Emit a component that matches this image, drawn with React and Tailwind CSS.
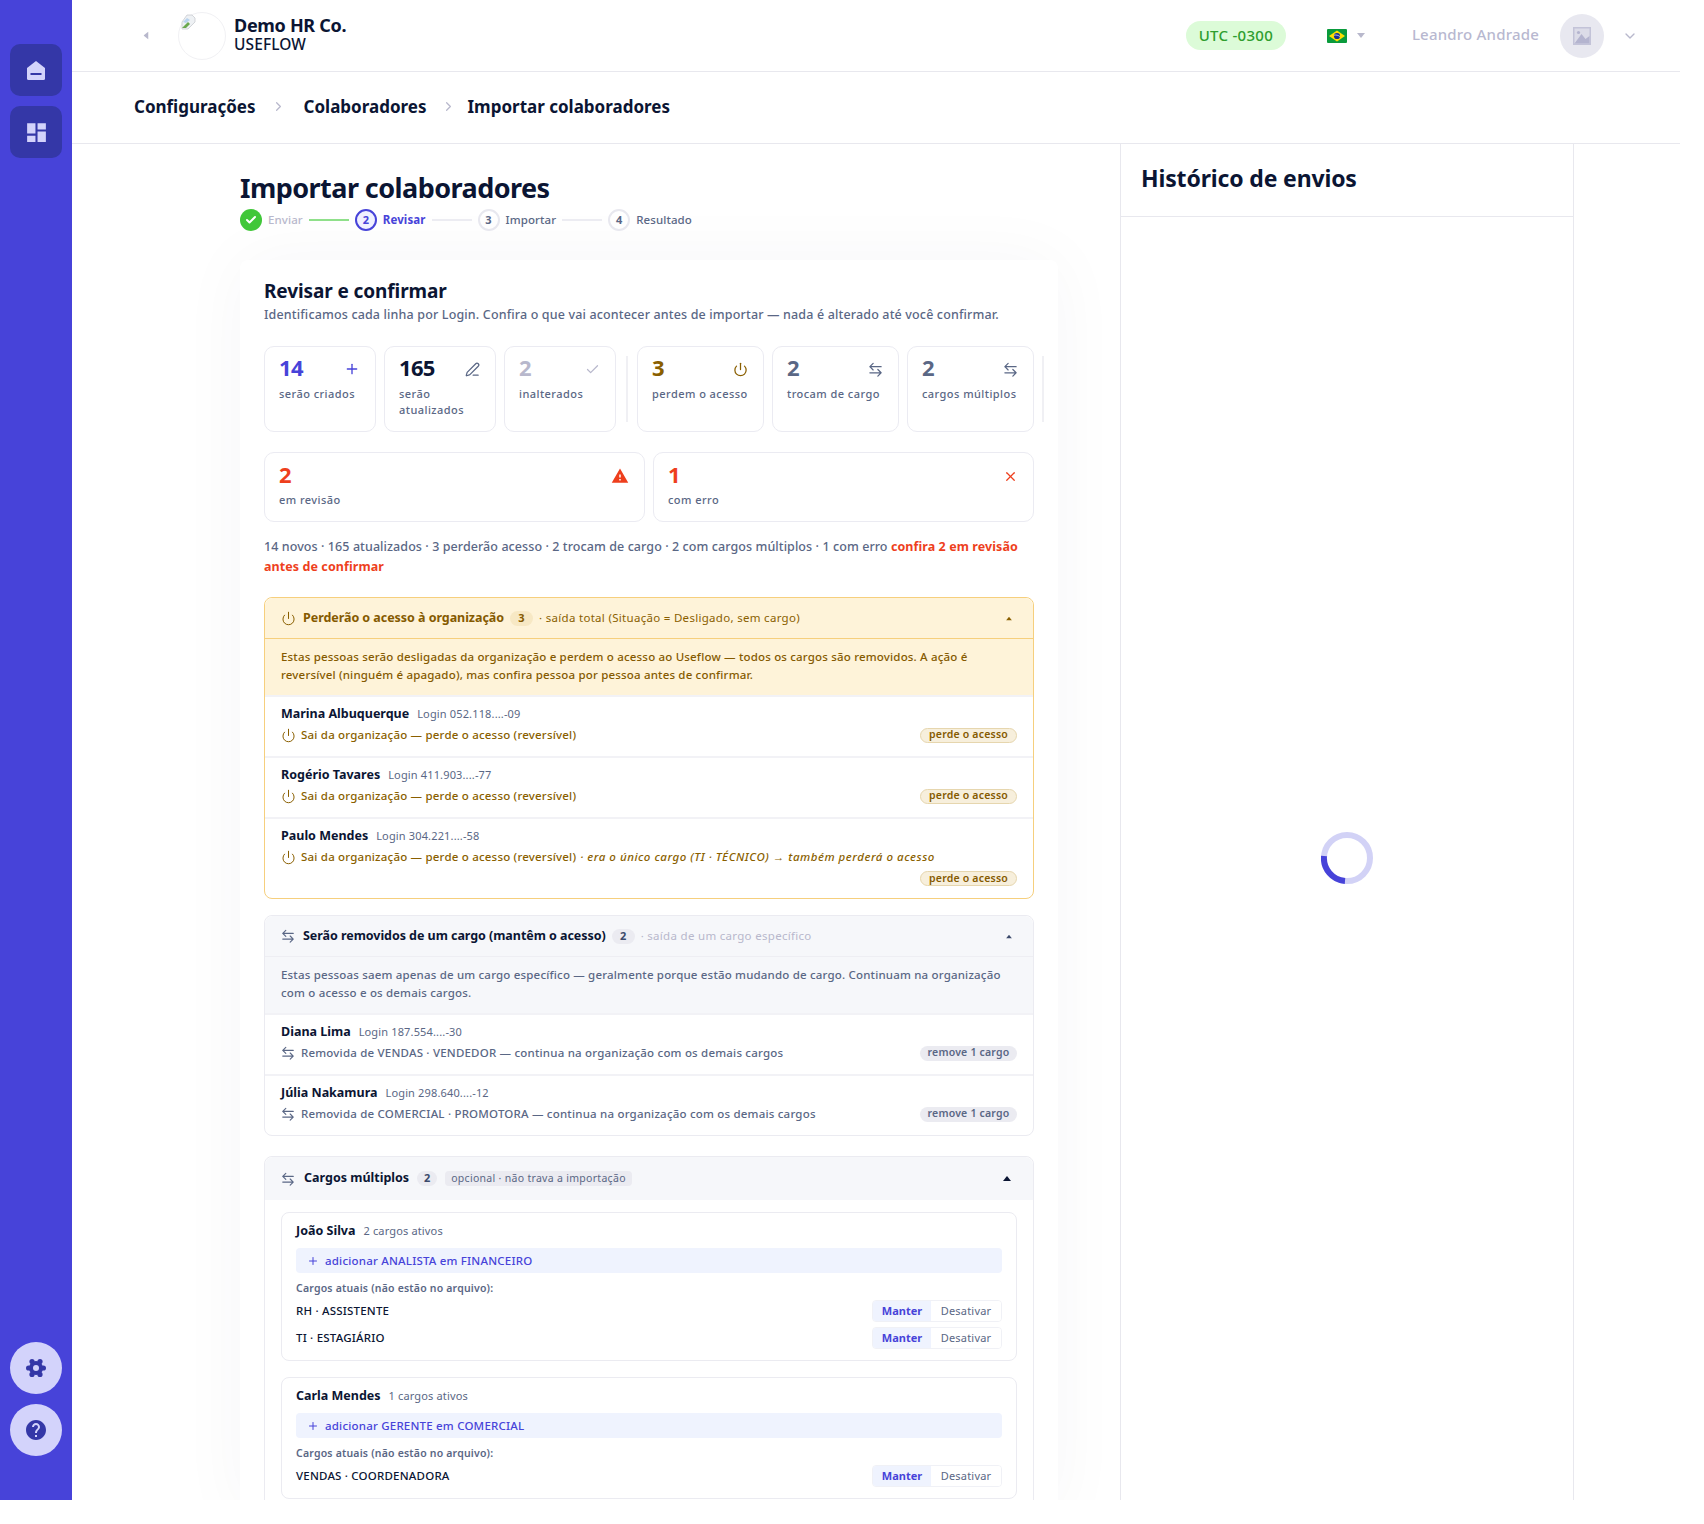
import React from 'react';
import { Check, ChevronDown, ChevronRight, PenLine, Plus, Power, X } from 'lucide-react';
import { MdDashboard, MdHelp, MdWarning } from 'react-icons/md';

const HomeIcon = () => (
    <svg width="24" height="24" viewBox="0 0 24 24">
        <path d="M12 3 21 10V20.5A1.5 1.5 0 0 1 19.5 22H4.5A1.5 1.5 0 0 1 3 20.5V10Z" fill="#d3d3fb" />
        <rect x="6.5" y="15" width="11" height="2" fill="#3437a7" />
    </svg>
);

const GearIcon = () => (
    <svg width="20" height="20" viewBox="0 0 20 20" fill="#3437a7">
        <circle cx="10" cy="10" r="7" />
        <circle cx="6" cy="3.6" r="2.6" />
        <circle cx="14" cy="3.6" r="2.6" />
        <circle cx="2.6" cy="10" r="2.6" />
        <circle cx="17.4" cy="10" r="2.6" />
        <circle cx="6" cy="16.4" r="2.6" />
        <circle cx="14" cy="16.4" r="2.6" />
        <circle cx="10" cy="10" r="3" fill="#d3d3fb" />
    </svg>
);

const SwapIcon = ({ size = 14 }) => (
    <svg width={size} height={size} viewBox="0 0 16 16" fill="none" stroke="currentColor" strokeWidth="1.3" strokeLinecap="round" strokeLinejoin="round">
        <path d="M2 5h12M5.5 1.5 2 5l3.5 3.5" />
        <path d="M14 11.5H2M10.5 8l3.5 3.5L10.5 15" />
    </svg>
);

const BrokenImage = () => (
    <svg width="16" height="16" viewBox="0 0 16 16" className="absolute left-[1px] top-[1px]">
        <path d="M7 1h5l3 3v4L8 15H2V8Z" fill="#eef1f4" stroke="#c9ccd1" strokeWidth="0.8" />
        <path d="M2 14 8 8l2 2-4 4Z" fill="#6aa84f" />
        <path d="M3 8l4-4 3 2-4 3Z" fill="#b9d3ee" />
    </svg>
);

const PhotoIcon = () => (
    <svg width="20" height="20" viewBox="0 0 20 20">
        <rect x="1" y="1" width="18" height="18" fill="#c3c3d8" />
        <rect x="2.5" y="2.5" width="15" height="15" fill="#dcdce8" />
        <circle cx="6.5" cy="6.5" r="1.6" fill="#b4b4cf" />
        <path d="M2.5 17.5 9.5 8l4 5 4-3v7.5Z" fill="#b4b4cf" />
    </svg>
);

const BrazilFlag = () => (
    <svg width="20" height="14" viewBox="0 0 20 14">
        <rect width="20" height="14" rx="1" fill="#0a9b3c" />
        <path d="M10 1.6 18 7l-8 5.4L2 7Z" fill="#fedf00" />
        <circle cx="10" cy="7" r="3.1" fill="#1b2f8f" />
        <path d="M7 6.2c2-.5 4.4 0 6 1.4" stroke="#fff" strokeWidth="0.7" fill="none" />
    </svg>
);

const Caret = ({ className = '' }) => (
    <svg width="8" height="5" viewBox="0 0 8 5" className={className} fill="currentColor">
        <path d="M4 0 8 5H0Z" />
    </svg>
);

const Spinner = () => (
    <svg width="52" height="52" viewBox="0 0 52 52" fill="none" strokeWidth="6" className="-mt-[2px]">
        <circle cx="26" cy="26" r="23" stroke="#d2d2f6" />
        <path d="M3 24a23 23 0 0 0 21 25" stroke="#4743d9" />
    </svg>
);

const steps = [
    { n: '2', label: 'Revisar', active: true },
    { n: '3', label: 'Importar' },
    { n: '4', label: 'Resultado' },
];

const Stepper = () => (
    <div className="mt-[3px] flex h-[22px] items-center gap-[6px] text-[11.5px] font-medium tracking-[0.1px]">
        <span className="flex h-[22px] w-[22px] items-center justify-center rounded-full bg-[#41c739]">
            <Check size={12} strokeWidth={4} color="#fff" />
        </span>
        <span className="text-[#b8b8cc]">Enviar</span>
        <span className="h-[2px] w-[40px] bg-[#8fe08a]" />
        {steps.map((step, i) => (
            <React.Fragment key={step.n}>
                {i > 0 && <span className="h-[2px] w-[40px] bg-[#ececf2]" />}
                <span
                    className={`flex h-[22px] w-[22px] items-center justify-center rounded-full border-2 text-[11px] font-bold ${
                        step.active ? 'border-[#4743d9] bg-[#f0f0ff] text-[#4743d9]' : 'border-[#e8e8ef] text-[#5a6785]'
                    }`}
                >
                    {step.n}
                </span>
                <span className={step.active ? 'font-bold text-[#4743d9]' : 'text-[#5a6785]'}>{step.label}</span>
            </React.Fragment>
        ))}
    </div>
);

const StatCard = ({ value, label, icon, color, wide }) => (
    <div className={`flex-1 rounded-[10px] border border-[#ebebf2] pl-[14px] pr-[10px] ${wide ? 'pt-[7px]' : 'pt-[6px]'}`}>
        <div className="flex h-[28px] items-center justify-between">
            <span className={`text-[22px] leading-[28px] font-bold tracking-[-0.7px] ${color}`}>{value}</span>
            <span className={`mr-[5px] mt-[4px] ${color}`}>{icon}</span>
        </div>
        <p className={`${wide ? 'mt-1' : 'mt-[5px]'} text-[11px] leading-[16px] font-medium tracking-[0.45px] text-[#5a6785]`}>{label}</p>
    </div>
);

const Section = ({ tone, icon, title, count, sub, desc, children }) => {
    const amber = tone === 'amber';
    return (
        <section className={`mb-4 rounded-[8px] border ${amber ? 'border-[#f6cf7d]' : 'border-[#ebebf1]'}`}>
            <header
                className={`flex h-[41px] items-center rounded-t-[8px] pl-[16px] pr-[20px] ${
                    amber ? 'border-b border-[#f6cf7d] bg-[#fef3d9]' : 'border-b border-[#eeeef3] bg-[#f6f7fa]'
                }`}
            >
                <span className={`w-[22px] ${amber ? 'text-[#8a5f00]' : 'text-[#5a6785]'}`}>{icon}</span>
                <span className={`text-[12.5px] font-bold tracking-[-0.05px] ${amber ? 'text-[#855a00]' : 'text-[#0b1533]'}`}>{title}</span>
                <span
                    className={`ml-[6px] flex h-[15px] w-[23px] items-center justify-center rounded-full text-[11px] font-bold ${
                        amber ? 'bg-[#f7e8c4] text-[#855a00]' : 'bg-[#ebebf1] text-[#3c4a6b]'
                    }`}
                >
                    {count}
                </span>
                <span className={`ml-[6px] text-[11.5px] tracking-[0.3px] ${amber ? 'text-[#8a5f00]' : 'text-[#b8b8cc]'}`}>{sub}</span>
                <Caret className={`ml-auto scale-75 ${amber ? 'text-[#8a5f00]' : 'text-[#3c4a6b]'}`} />
            </header>
            <p
                className={`px-4 pt-[9px] pb-[11px] text-[11.5px] leading-[18px] font-medium tracking-[0.18px] ${
                    amber ? 'bg-[#fef3d9] text-[#855a00]' : 'bg-[#f6f7fa] text-[#5a6785]'
                }`}
            >
                {desc}
            </p>
            {children}
        </section>
    );
};

const PersonRow = ({ name, login, text, extra, badge, tone, icon }) => {
    const amber = tone === 'amber';
    return (
        <div className={`border-t-2 border-[#f2f2f6] px-4 pt-[8px] ${extra ? 'pb-[12px]' : 'pb-[11px]'}`}>
            <div className="flex h-[18px] items-center gap-[8px]">
                <span className="text-[12.5px] font-bold text-[#0b1533]">{name}</span>
                <span className="text-[11px] tracking-[0.15px] text-[#5a6785]">Login {login}</span>
            </div>
            <div className="mt-[2px] flex flex-wrap items-center justify-between gap-y-1">
                <div className={`flex h-[20px] items-center text-[11.5px] font-medium tracking-[0.2px] whitespace-nowrap ${amber ? 'text-[#8a5f00]' : 'text-[#5a6785]'}`}>
                    <span className="w-[20px]">{icon}</span>
                    <span>{text}</span>
                    {extra && <em className="ml-[4px] tracking-[0.52px]">· {extra}</em>}
                </div>
                <span
                    className={`ml-auto flex h-[15px] w-[97px] items-center justify-center rounded-full text-[10.5px] font-semibold tracking-[0.2px] ${
                        amber ? 'border border-[#e6d6ae] bg-[#f7efdc] text-[#855a00]' : 'bg-[#ebebf1] text-[#5a6785]'
                    }`}
                >
                    {badge}
                </span>
            </div>
        </div>
    );
};

const Segment = ({ label, className = '' }) => (
    <div className={`flex items-center justify-between ${className}`}>
        <span className="text-[11.5px] font-medium tracking-[0.2px] text-[#0b1533]">{label}</span>
        <div className="flex h-[22px] w-[130px] overflow-hidden rounded-[4px] border border-[#f0f1f6] text-[11px]">
            <span className="flex w-[58px] items-center justify-center bg-[#eff3fe] font-bold text-[#4743d9]">Manter</span>
            <span className="flex flex-1 items-center justify-center bg-white tracking-[0.2px] text-[#5a6785]">Desativar</span>
        </div>
    </div>
);

const MultiCard = ({ name, active, add, cargos, className = '' }) => (
    <div className={`rounded-[8px] border border-[#ebebf1] px-[14px] pt-[9px] pb-[11px] ${className}`}>
        <div className="flex h-[18px] items-center gap-[8px]">
            <span className="text-[12.5px] font-bold text-[#0b1533]">{name}</span>
            <span className="text-[11px] tracking-[0.15px] text-[#5a6785]">{active}</span>
        </div>
        <div className="mt-[8px] flex h-[25px] items-center gap-[6px] rounded-[4px] bg-[#eff3fe] px-[11px] text-[11.5px] font-medium tracking-[0.2px] text-[#4743d9]">
            <Plus size={12} />
            <span>{add}</span>
        </div>
        <p className="mt-[7px] text-[10.5px] leading-[16px] font-semibold tracking-[0.2px] text-[#5a6785]">Cargos atuais (não estão no arquivo):</p>
        {cargos.map((cargo, i) => (
            <Segment key={cargo} label={cargo} className={i === 0 ? 'mt-[4px]' : 'mt-[5px]'} />
        ))}
    </div>
);

const powerIcon = <Power size={15} strokeWidth={1.6} />;
const swapIcon = <SwapIcon />;

const App = () => (
    <div className="flex h-[1500px] w-[1680px] overflow-hidden bg-white font-['Noto_Sans',sans-serif] text-[#0b1533]">
        <aside className="flex w-[72px] shrink-0 flex-col items-center gap-[10px] bg-[#4743d9] pt-[44px] pb-[44px]">
            <button className="flex h-[52px] w-[52px] items-center justify-center rounded-[10px] bg-[#3437a7]">
                <HomeIcon />
            </button>
            <button className="flex h-[52px] w-[52px] items-center justify-center rounded-[10px] bg-[#3437a7]">
                <MdDashboard size={25} color="#d3d3fb" />
            </button>
            <button className="mt-auto flex h-[52px] w-[52px] items-center justify-center rounded-full bg-[#d3d3fb]">
                <GearIcon />
            </button>
            <button className="flex h-[52px] w-[52px] items-center justify-center rounded-full bg-[#d3d3fb]">
                <MdHelp size={24} color="#3437a7" />
            </button>
        </aside>

        <div className="flex min-w-0 flex-1 flex-col">
            <div className="flex h-[72px] shrink-0 items-center border-b border-[#e8e8ee] pr-[42px]">
                <Caret className="ml-[70px] -rotate-90 text-[#b8b8cc]" />
                <div className="relative ml-[28px] h-[48px] w-[48px] rounded-full border border-[#f1f1f4]">
                    <BrokenImage />
                </div>
                <div className="-mt-[3px] ml-[8px]">
                    <p className="text-[18px] leading-[20px] font-bold tracking-[-0.3px]">Demo HR Co.</p>
                    <p className="text-[15.5px] leading-[18px] font-medium tracking-[0.1px]">USEFLOW</p>
                </div>
                <span className="ml-auto flex h-[29px] w-[100px] items-center justify-center rounded-full bg-[#dcfbd8] pb-[1px] text-[15px] font-medium tracking-[0.3px] text-[#2f9e2f]">
                    UTC -0300
                </span>
                <span className="ml-[41px]"><BrazilFlag /></span>
                <Caret className="ml-[10px] rotate-180 text-[#b8b8cc]" />
                <span className="ml-[47px] pb-[2px] text-[15px] font-medium tracking-[0.2px] text-[#b8b8d0]">Leandro Andrade</span>
                <span className="ml-[21px] flex h-[44px] w-[44px] items-center justify-center rounded-full bg-[#e8e8f0]">
                    <PhotoIcon />
                </span>
                <ChevronDown size={16} className="ml-[18px] text-[#b8b8cc]" />
            </div>

            <nav className="flex h-[72px] shrink-0 items-center border-b border-[#e8e8ee] pb-[2px] pl-[62px] text-[17px] font-bold">
                <span>Configurações</span>
                <ChevronRight size={15} className="ml-[15px] mr-[18px] text-[#b8b8cc]" />
                <span>Colaboradores</span>
                <ChevronRight size={15} className="ml-[15px] mr-[11px] text-[#b8b8cc]" />
                <span>Importar colaboradores</span>
            </nav>

            <div className="flex min-h-0 flex-1">
                <main className="w-[1048px] shrink-0 pl-[168px]">
                    <div className="w-[818px] pt-[26px]">
                        <h1 className="text-[27px] leading-[36px] font-bold tracking-[-0.55px]">Importar colaboradores</h1>
                        <Stepper />
                        <div className="mt-[29px] rounded-t-[8px] bg-white px-[24px] pt-[17px] shadow-[0_0_70px_rgba(30,30,80,0.04)]">
                            <h2 className="text-[19px] leading-[28px] font-bold tracking-[-0.1px]">Revisar e confirmar</h2>
                            <p className="text-[12.5px] leading-[20px] font-medium tracking-[0.15px] text-[#5a6785]">
                                Identificamos cada linha por Login. Confira o que vai acontecer antes de importar — nada é alterado até você confirmar.
                            </p>

                            <div className="mt-[21px] flex h-[86px]">
                                <div className="flex w-[352px] shrink-0 gap-2">
                                    <StatCard value="14" label="serão criados" color="text-[#4743d9]" icon={<Plus size={16} />} />
                                    <StatCard value="165" label="serão atualizados" color="text-[#0b1533]" icon={<PenLine size={15} className="text-[#5a6785]" />} />
                                    <StatCard value="2" label="inalterados" color="text-[#b8b8cc]" icon={<Check size={15} />} />
                                </div>
                                <span className="my-[10px] ml-[10px] w-[2px] shrink-0 bg-[#f0f0f4]" />
                                <div className="ml-[9px] flex w-[397px] shrink-0 gap-2">
                                    <StatCard value="3" label="perdem o acesso" color="text-[#8a5f00]" icon={<Power size={15} />} />
                                    <StatCard value="2" label="trocam de cargo" color="text-[#5a6785]" icon={<SwapIcon size={15} />} />
                                    <StatCard value="2" label="cargos múltiplos" color="text-[#5a6785]" icon={<SwapIcon size={15} />} />
                                </div>
                                <span className="my-[10px] ml-[8px] w-[2px] shrink-0 bg-[#f0f0f4]" />
                            </div>

                            <div className="mt-5 flex h-[70px] gap-2">
                                <StatCard wide value="2" label="em revisão" color="text-[#ee3f1d]" icon={<MdWarning size={18} />} />
                                <StatCard wide value="1" label="com erro" color="text-[#ee3f1d]" icon={<X size={15} />} />
                            </div>

                            <p className="mt-[15px] text-[12.5px] leading-[20px] font-medium tracking-[0.08px] text-[#5a6785]">
                                14 novos · 165 atualizados · 3 perderão acesso · 2 trocam de cargo · 2 com cargos múltiplos · 1 com erro{' '}
                                <span className="font-bold text-[#ee3f1d]">confira 2 em revisão antes de confirmar</span>
                            </p>

                            <div className="mt-5">
                                <Section
                                    tone="amber"
                                    icon={powerIcon}
                                    title="Perderão o acesso à organização"
                                    count="3"
                                    sub="· saída total (Situação = Desligado, sem cargo)"
                                    desc="Estas pessoas serão desligadas da organização e perdem o acesso ao Useflow — todos os cargos são removidos. A ação é reversível (ninguém é apagado), mas confira pessoa por pessoa antes de confirmar."
                                >
                                    <PersonRow tone="amber" icon={powerIcon} name="Marina Albuquerque" login="052.118....-09" text="Sai da organização — perde o acesso (reversível)" badge="perde o acesso" />
                                    <PersonRow tone="amber" icon={powerIcon} name="Rogério Tavares" login="411.903....-77" text="Sai da organização — perde o acesso (reversível)" badge="perde o acesso" />
                                    <PersonRow
                                        tone="amber"
                                        icon={powerIcon}
                                        name="Paulo Mendes"
                                        login="304.221....-58"
                                        text="Sai da organização — perde o acesso (reversível)"
                                        extra="era o único cargo (TI · TÉCNICO) → também perderá o acesso"
                                        badge="perde o acesso"
                                    />
                                </Section>

                                <Section
                                    icon={swapIcon}
                                    title="Serão removidos de um cargo (mantêm o acesso)"
                                    count="2"
                                    sub="· saída de um cargo específico"
                                    desc="Estas pessoas saem apenas de um cargo específico — geralmente porque estão mudando de cargo. Continuam na organização com o acesso e os demais cargos."
                                >
                                    <PersonRow icon={swapIcon} name="Diana Lima" login="187.554....-30" text="Removida de VENDAS · VENDEDOR — continua na organização com os demais cargos" badge="remove 1 cargo" />
                                    <PersonRow icon={swapIcon} name="Júlia Nakamura" login="298.640....-12" text="Removida de COMERCIAL · PROMOTORA — continua na organização com os demais cargos" badge="remove 1 cargo" />
                                </Section>

                                <section className="mt-5 rounded-t-[8px] border border-[#ebebf1] px-4 pb-4">
                                    <header className="-mx-4 flex h-[43px] items-center rounded-t-[8px] bg-[#f6f7fa] pl-[16px] pr-[20px]">
                                        <span className="w-[23px] text-[#5a6785]">{swapIcon}</span>
                                        <span className="text-[12.5px] font-bold">Cargos múltiplos</span>
                                        <span className="ml-[8px] flex h-[15px] w-[20px] items-center justify-center rounded-full bg-[#ebebf1] text-[11px] font-bold text-[#3c4a6b]">2</span>
                                        <span className="ml-[8px] flex h-[15px] items-center rounded-[4px] bg-[#ebebf1] px-[6px] text-[10.5px] tracking-[0.3px] text-[#5a6785]">
                                            opcional · não trava a importação
                                        </span>
                                        <Caret className="ml-auto mr-[2px] text-[#0b1533]" />
                                    </header>
                                    <MultiCard
                                        className="mt-[12px]"
                                        name="João Silva"
                                        active="2 cargos ativos"
                                        add="adicionar ANALISTA em FINANCEIRO"
                                        cargos={['RH · ASSISTENTE', 'TI · ESTAGIÁRIO']}
                                    />
                                    <MultiCard
                                        className="mt-4"
                                        name="Carla Mendes"
                                        active="1 cargos ativos"
                                        add="adicionar GERENTE em COMERCIAL"
                                        cargos={['VENDAS · COORDENADORA']}
                                    />
                                </section>
                            </div>
                        </div>
                    </div>
                </main>

                <aside className="flex w-[454px] shrink-0 flex-col border-x border-[#e8e8ee]">
                    <div className="flex h-[73px] shrink-0 items-center border-b border-[#e8e8ee] pb-[3px] pl-[20px]">
                        <h2 className="text-[23px] font-bold tracking-[-0.15px]">Histórico de envios</h2>
                    </div>
                    <div className="flex flex-1 items-center justify-center">
                        <Spinner />
                    </div>
                </aside>
            </div>
        </div>
    </div>
);

export default App;
